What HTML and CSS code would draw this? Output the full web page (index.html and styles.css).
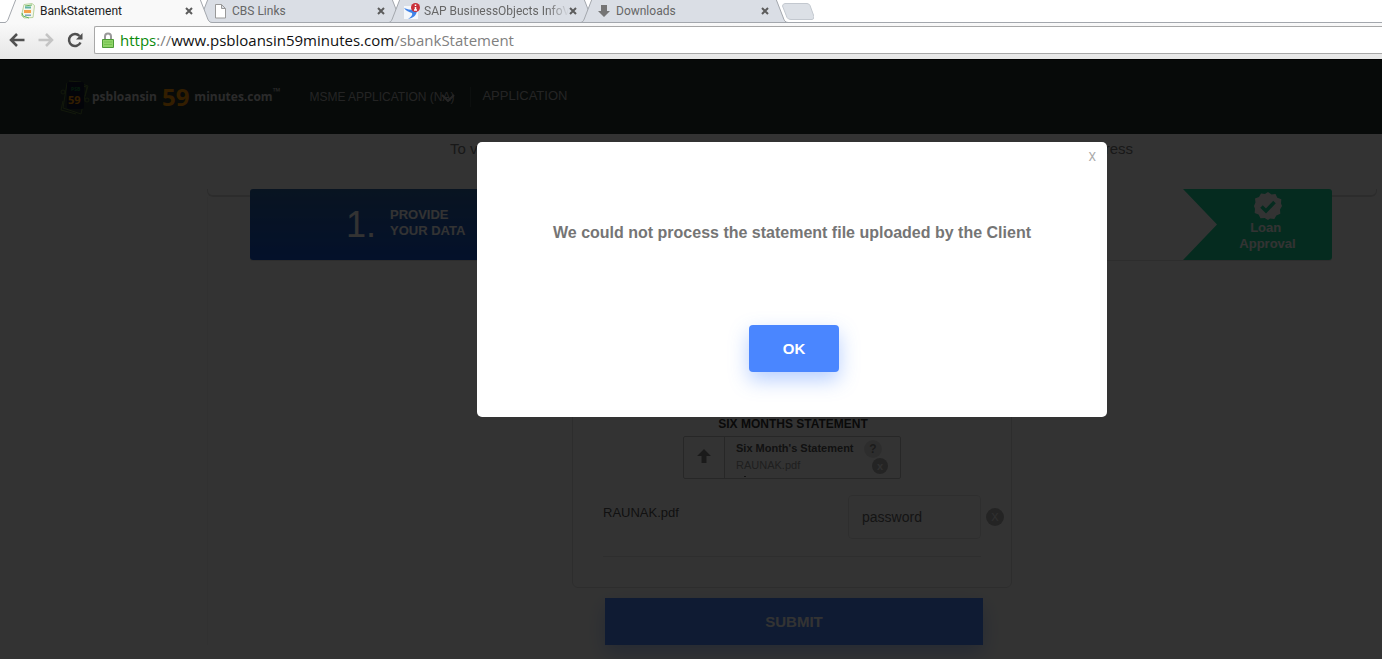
FILE: index.html
```html
<!DOCTYPE html>
<html lang="en">
<head>
<meta charset="utf-8">
<title>BankStatement</title>
<link rel="stylesheet" href="styles.css">
</head>
<body>
<div class="browser">
  <div class="tabs">
    <div class="tab tab-active">
      <svg class="tab-shape" viewBox="0 0 212 24" preserveAspectRatio="none"><path d="M-4 24V22.500H1C3 22 4 20 5 17L12-1H196L203 17C204 20 205 22.500 208 22.500H212V24Z"/></svg>
      <svg class="tab-icon" viewBox="0 0 16 16"><path d="M4 1.500l8-1 2.500 2-1.500 12-9 .5-2.500-2.500z" fill="#f4f7ea" stroke="#b9d3a0"/><path d="M5 3l7-1M2 10l1 3 6 2" stroke="#63b55c" fill="none"/><path d="M5 3.500h6v2H5z" fill="#5fb3a8"/><path d="M4 7h7v3H4z" fill="#f4a04a"/><path d="M5 11.500h6v1.500H5z" fill="#7fa3c5"/></svg>
      <span class="tab-title">BankStatement</span>
      <button class="tab-close" aria-label="Close tab"><svg viewBox="0 0 8 8"><path d="M1 1l6 6M7 1L1 7"/></svg></button>
    </div>
    <div class="tab">
      <svg class="tab-shape" viewBox="0 0 212 24" preserveAspectRatio="none"><path d="M1 22.500C3 22 4 20 5 17L12-1H196L203 17C204 20 205 22.500 208 22.500Z"/></svg>
      <svg class="tab-icon" viewBox="0 0 16 16"><path d="M3.500 1.500h6l4 4v9.500h-10zM9.500 1.500v4h4" fill="#fff" stroke="#999"/></svg>
      <span class="tab-title">CBS Links</span>
      <button class="tab-close" aria-label="Close tab"><svg viewBox="0 0 8 8"><path d="M1 1l6 6M7 1L1 7"/></svg></button>
    </div>
    <div class="tab">
      <svg class="tab-shape" viewBox="0 0 212 24" preserveAspectRatio="none"><path d="M1 22.500C3 22 4 20 5 17L12-1H196L203 17C204 20 205 22.500 208 22.500Z"/></svg>
      <svg class="tab-icon" viewBox="0 0 16 16"><path d="M0 3h14v13H0z" fill="#f4f7fb"/><path d="M0 5c3 1 6 2 10 2l3 1c-1 5-4 7-9 8 3-2 5-4 4-6C5 9 2 8 0 5z" fill="#3f83e8"/><circle cx="11.500" cy="4.500" r="4.500" fill="#c9303a"/><path d="M11.500 1.500v1.500M11.500 4v3M10 7h3" stroke="#fff" stroke-width="1.500"/></svg>
      <span class="tab-title tab-title-fade">SAP BusinessObjects InfoV</span>
      <button class="tab-close" aria-label="Close tab"><svg viewBox="0 0 8 8"><path d="M1 1l6 6M7 1L1 7"/></svg></button>
    </div>
    <div class="tab">
      <svg class="tab-shape" viewBox="0 0 212 24" preserveAspectRatio="none"><path d="M1 22.500C3 22 4 20 5 17L12-1H196L203 17C204 20 205 22.500 208 22.500Z"/></svg>
      <svg class="tab-icon" viewBox="0 0 16 16"><path d="M5 2h6v6h3l-6 6-6-6h3z" fill="#757575"/></svg>
      <span class="tab-title">Downloads</span>
      <button class="tab-close" aria-label="Close tab"><svg viewBox="0 0 8 8"><path d="M1 1l6 6M7 1L1 7"/></svg></button>
    </div>
    <button class="new-tab" aria-label="New tab"><svg viewBox="0 0 32 17"><path d="M3 .500h22q2 0 3 2l4 11q0 3-2 3H9q-3 0-4-2L.500 3q0-2 2.500-2.500z" fill="#dce0e6" stroke="#c3c8cf"/></svg></button>
  </div>
  <div class="toolbar">
    <button class="tool" aria-label="Back"><svg viewBox="0 0 16 16"><path d="M15.500 8H2.500M8 2L2 8l6 6" stroke="#505050"/></svg></button>
    <button class="tool" aria-label="Forward"><svg viewBox="0 0 16 16"><path d="M.500 8h13M8 2l6 6-6 6" stroke="#c4c4c4"/></svg></button>
    <button class="tool" aria-label="Reload"><svg viewBox="0 0 16 16"><path d="M13.500 10.500A6 6 0 1 1 12.500 4" stroke="#505050"/><path d="M15.500 1v6.500H9z" fill="#505050"/></svg></button>
    <div class="address">
      <svg class="lock" viewBox="0 0 12 16"><path d="M3 8V4.500a3 3 0 0 1 6 0V8" fill="none" stroke="#999" stroke-width="2"/><path d="M.500 7.500h11v8H.500z" fill="#8fd468" stroke="#4c9a36"/><path d="M2 10h8M2 12.500h8" stroke="#74c14e"/></svg>
      <a class="url" href="#"><span class="url-scheme">https</span><span>://</span><span class="url-host">www.psbloansin59minutes.com</span><span>/sbankStatement</span></a>
    </div>
  </div>
</div>

<div class="page">
  <header class="site-header">
    <a class="logo" href="#">
      <svg class="logo-mark" viewBox="0 0 30 36"><g fill="none" stroke="#5c7a37"><path d="M7 4l20 4-6 27-18-6z"/><path d="M9 2l12 1M22 5l6 2-3 10M3 22L1 31l15 4"/><circle cx="3" cy="13" r="2"/><circle cx="27" cy="21" r="2"/></g><rect x="7" y="3" width="17" height="27" rx="2" fill="#10162e"/><text x="11" y="12" font-size="5" fill="#168b3f">PSB</text><text x="8" y="25" font-size="11" fill="#ff9800">59</text></svg>
      <span class="logo-text">psbloansin</span><span class="logo-number">59</span><span class="logo-text">minutes.com</span><span class="logo-tm">™</span>
    </a>
    <nav class="site-nav">
      <div class="picker">
        <select class="picker-select" aria-label="Application type"><option>MSME APPLICATION (NA)</option></select>
        <svg class="picker-arrow" viewBox="0 0 14 8"><path d="M1 1l6 6 6-6" fill="none" stroke="#bbb" stroke-width="2"/></svg>
      </div>
      <a class="nav-link" href="#">APPLICATION</a>
    </nav>
  </header>

  <main class="content">
    <div class="intro"><span>To v</span><span>ress</span></div>
    <div class="panel-foot"></div>
    <div class="panel">
      <div class="steps">
        <div class="step step-data"><span class="step-number">1.</span><span class="step-label">PROVIDE<br>YOUR DATA</span></div>
        <div class="step step-approval">
          <svg class="seal" viewBox="0 0 28 28"><path d="M14 0l3.500 2.500L21.500 2l1.800 3.800 4 1.500-.3 4.200L28 14l-2 3.600.3 4.200-4 1.700-2 3.400-4.200-.4L14 28l-3.300-2-4.200.3-1.900-3.700-3.900-1.600.3-4.300L0 14l1.500-3.500L1 6.500l4-1.500 2-3.500 4 .5z" fill="#fff"/><path d="M7.500 14.500l4.500 4.500 8.500-9" fill="none" stroke="#1dd69b" stroke-width="3.600"/></svg>
          <span>Loan&nbsp;<br>Approval</span>
        </div>
      </div>
      <form class="card">
        <h2 class="card-title">SIX MONTHS STATEMENT</h2>
        <div class="upload">
          <button type="button" class="upload-button" aria-label="Upload"><svg viewBox="0 0 14 14"><path d="M7 0l7 7H9.500v7h-5V7H0z" fill="#808080"/></svg></button>
          <div class="upload-text"><b>Six Month's Statement</b><span>RAUNAK.pdf</span></div>
          <div class="upload-actions"><button type="button" class="round round-help">?</button><button type="button" class="round round-small">x</button></div>
        </div>
        <div class="file-row">
          <label class="file-name" for="file-password">RAUNAK.pdf</label>
          <input class="file-password" id="file-password" type="text" value="password">
          <button type="button" class="round">X</button>
        </div>
      </form>
      <button class="submit">SUBMIT</button>
    </div>
  </main>

  <div class="overlay">
    <div class="dialog" role="dialog" aria-labelledby="dialog-message">
      <button class="dialog-close" aria-label="Close">X</button>
      <p class="dialog-message" id="dialog-message">We could not process the statement file uploaded by the Client</p>
      <button class="dialog-ok">OK</button>
    </div>
  </div>
</div>
</body>
</html>
```
FILE: styles.css
```css
* { box-sizing: border-box; }
body {
  margin: 0;
  min-height: 100vh;
  display: flex;
  flex-direction: column;
  overflow: hidden;
  font-family: "Liberation Sans", Arial, sans-serif;
  background: #fff;
}
button { border: 0; padding: 0; background: none; font-family: inherit; }
a { color: inherit; text-decoration: none; }

/* Browser frame */
.browser { font-family: "Open Sans", "Noto Sans", sans-serif; }
.tabs {
  display: flex;
  height: 23px;
  padding-left: 4px;
  overflow: hidden;
  box-shadow: inset 0 -1px #a3a7ad;
}
.tab {
  position: relative;
  z-index: 0;
  display: flex;
  align-items: center;
  width: 192px;
  padding: 0 3px 1px 16px;
  color: #666;
}
.tab-active { z-index: 1; color: #222; }
.tab-shape {
  position: absolute;
  left: 0;
  top: 0;
  z-index: -1;
  width: 212px;
  height: 24px;
  overflow: visible;
  fill: #dadee5;
  stroke: #a3a7ad;
}
.tab-active .tab-shape { fill: #f9f9f9; }
.tab-icon { flex: none; width: 16px; height: 16px; margin-right: 4px; }
.tab-title { flex: 1; min-width: 0; white-space: nowrap; font: 12px/20px Roboto, sans-serif; }
.tab-title-fade { -webkit-mask-image: linear-gradient(to right, #000 85%, transparent); mask-image: linear-gradient(to right, #000 85%, transparent); }
.tab-close { flex: none; display: flex; justify-content: center; width: 8px; }
.tab-close svg { width: 8px; height: 8px; stroke: #5c5c5c; stroke-width: 2; }
.new-tab { width: 32px; height: 17px; margin: 3px 0 0 10px; }
.new-tab svg { display: block; }
.toolbar {
  display: flex;
  align-items: center;
  height: 36px;
  padding: 0 0 2px 9px;
  background: linear-gradient(#f9f9f9, #e6e6e6);
}
.tool { width: 16px; height: 16px; margin-right: 13px; }
.tool svg { display: block; fill: none; stroke-width: 2.5; }
.address {
  flex: 1;
  display: flex;
  align-items: center;
  gap: 6px;
  height: 28px;
  margin-left: -2px;
  padding-left: 7px;
  border: 1px solid #a8a8a8;
  border-right: 0;
  border-radius: 2px 0 0 2px;
  background: #fff;
}
.lock { width: 12px; height: 16px; }
.url { font-size: 15px; line-height: 24px; color: #808080; white-space: nowrap; }
.url-scheme { color: #0b8a0b; }
.url-host { color: #111; }

/* Site */
.page { position: relative; flex: 1; background: #fff; border-top: 1px solid #000; }
.site-header {
  display: flex;
  align-items: center;
  height: 74px;
  padding-left: 60px;
  background: #23322d;
}
.logo { display: flex; align-items: center; font: bold 12px/24px "Open Sans", sans-serif; color: #d4d4d4; }
.logo-mark { width: 30px; height: 36px; margin-right: 2px; }
.logo-mark text { font-family: "Open Sans", sans-serif; font-weight: bold; }
.logo-number { margin: 0 5px; font-size: 24px; color: #ff9800; }
.logo-tm { align-self: flex-start; font-size: 10px; }
.site-nav { display: flex; align-items: center; margin-left: 29px; color: #b4b4b4; }
.picker { position: relative; padding-right: 15px; border-right: 1px solid #3c4b46; }
.picker-select {
  appearance: none;
  border: 0;
  padding: 0;
  background: none;
  color: inherit;
  font: 12px/20px "Liberation Sans", Arial, sans-serif;
}
.picker-arrow { position: absolute; right: 15px; top: 7px; width: 14px; height: 8px; }
.nav-link { padding: 0 0 3px 11px; font-size: 13px; line-height: 20px; }

.content { padding: 0 5px 0 207px; }
.intro {
  display: flex;
  justify-content: space-between;
  height: 55px;
  padding: 5px 244px 0 243px;
  font-size: 15px;
  line-height: 20px;
  color: #787878;
}
.panel-foot { height: 8px; border: 1px solid #ddd; border-top: 0; border-bottom-width: 2px; border-radius: 0 0 6px 6px; }
.panel { display: flex; flex-direction: column; align-items: center; box-shadow: inset 1px 0 #f5f5f5; }
.steps {
  position: relative;
  align-self: stretch;
  display: flex;
  justify-content: space-between;
  height: 71px;
  margin: -8px 45px 0 43px;
  border-radius: 3px;
  background: #fff;
  box-shadow: 0 1px 1px #ddd;
  overflow: hidden;
  color: #fff;
}
.step { display: flex; align-items: center; }
.step-data { width: 300px; padding: 0 0 3px 96px; background: linear-gradient(#2d64a5, #1455d2); }
.step-number { width: 44px; padding-top: 3px; font: 36px/40px "Liberation Sans", Arial, sans-serif; }
.step-label { font-size: 13px; line-height: 16px; font-weight: bold; }
.step-approval {
  flex-direction: column;
  width: 149px;
  padding: 3px 0 0 20px;
  background: #1dd69b;
  clip-path: polygon(0 0, 100% 0, 100% 100%, 0 100%, 34px 50%);
  font-size: 13px;
  line-height: 16px;
  font-weight: bold;
  text-align: center;
}
.seal { width: 28px; height: 28px; }
.card {
  width: 440px;
  margin-top: 30px;
  padding: 125px 6px 0 30px;
  height: 298px;
  border: 1px solid #e0e0e0;
  border-radius: 6px;
}
.card-title { margin: 0 22px 4px 0; text-align: center; font-size: 12px; line-height: 16px; color: #333; }
.upload { display: flex; width: 218px; height: 43px; margin-left: 80px; border: 1px solid #c3c3c3; border-radius: 2px; overflow: hidden; }
.upload-button { display: grid; place-items: center; width: 41px; padding-bottom: 3px; border-right: 1px solid #c3c3c3; }
.upload-button svg { width: 14px; height: 14px; }
.upload-text { display: flex; flex-direction: column; padding: 3px 0 0 11px; width: 139px; font-size: 11px; line-height: 17px; color: #555; white-space: nowrap; }
.upload-text span { color: #999; }
.upload-text::after { content: ""; width: 2px; height: 1px; margin: 2px 0 0 8px; background: #666; }
.upload-actions { display: flex; flex-direction: column; }
.round {
  flex: none;
  width: 18px;
  height: 18px;
  border-radius: 50%;
  background: #b4b4b4;
  color: #f0f0f0;
  font-size: 11px;
  line-height: 18px;
  text-align: center;
}
.round-help { margin-top: 3px; background: #e2e2e2; color: #888; font-size: 12px; font-weight: bold; }
.round-small { width: 16px; height: 16px; margin-left: 8px; line-height: 14px; font-weight: bold; }
.file-row {
  display: flex;
  align-items: center;
  gap: 5px;
  margin: 16px 24px 0 0;
  padding-bottom: 17px;
  border-bottom: 1px solid #e6e6e6;
}
.file-name { flex: 1; padding-bottom: 8px; font-size: 13px; line-height: 18px; color: #555; }
.file-password {
  width: 133px;
  height: 44px;
  padding: 0 13px;
  border: 1px solid #e6e6e6;
  border-radius: 4px;
  background: none;
  font: 14px/20px "Liberation Sans", Arial, sans-serif;
  color: #666;
}
.file-row .round { margin-right: -23px; }
.submit {
  width: 378px;
  height: 47px;
  margin: 10px 0 0 4px;
  background: #4a86ff;
  box-shadow: 0 8px 20px rgba(74, 134, 255, .4);
  color: #fff;
  font-size: 15px;
  font-weight: bold;
}

/* Message dialog */
.overlay {
  position: absolute;
  inset: -1px 0 0;
  z-index: 2;
  display: flex;
  justify-content: center;
  align-items: flex-start;
  padding: 83px 0 0 202px;
  background: rgba(0, 0, 0, .8);
}
.dialog { display: flex; flex-direction: column; align-items: center; width: 630px; padding-bottom: 45px; border-radius: 5px; background: #fff; }
.dialog-close { align-self: flex-end; margin: 5px 11px 0 0; font: 12px/20px Roboto, sans-serif; color: #aaa; }
.dialog-message { margin: 56px 0 82px; font-size: 16px; line-height: 20px; font-weight: bold; color: #757575; }
.dialog-ok {
  width: 90px;
  height: 47px;
  margin-left: 4px;
  border-radius: 4px;
  background: #4a86ff;
  box-shadow: 0 8px 20px rgba(74, 134, 255, .4);
  color: #fff;
  font-size: 15px;
  font-weight: bold;
}
```
